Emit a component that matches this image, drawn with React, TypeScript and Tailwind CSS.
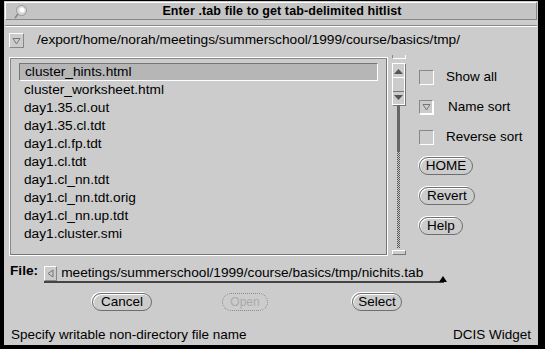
import React from 'react';

const files = [
  'cluster_hints.html',
  'cluster_worksheet.html',
  'day1.35.cl.out',
  'day1.35.cl.tdt',
  'day1.cl.fp.tdt',
  'day1.cl.tdt',
  'day1.cl_nn.tdt',
  'day1.cl_nn.tdt.orig',
  'day1.cl_nn.up.tdt',
  'day1.cluster.smi',
];

const font = { fontFamily: '"Liberation Sans", Arial, sans-serif' };

const DownTri = () => (
  <svg width="9" height="8" viewBox="0 0 9 8">
    <path d="M1 1.5 H8 L4.5 7 Z" fill="none" stroke="#777" strokeWidth="1" />
  </svg>
);

const PillButton: React.FC<{ label: string; w: string }> = ({ label, w }) => (
  <div
    className={`${w} h-[18px] rounded-full border border-[#6e6e6e] shadow-[inset_1px_1px_0_#ffffff,-1px_-1px_0_#ffffff] flex items-center justify-center text-[13.5px] text-black`}
  >
    {label}
  </div>
);

const Check: React.FC<{ label: string; on?: boolean }> = ({ label, on }) => (
  <div className="flex items-center h-[14px]">
    <div
      className={`w-[14px] h-[14px] border-t border-l border-[#888] shadow-[1px_1px_0_#ffffff] flex items-center justify-center ${
        on ? 'border-r border-b border-r-[#ffffff] border-b-[#ffffff]' : ''
      }`}
    >
      {on && <DownTri />}
    </div>
    <span className={`${on ? 'ml-[15px]' : 'ml-[13px]'} text-[13.5px]`}>{label}</span>
  </div>
);

export default function App() {
  return (
    <div className="w-[545px] h-[349px] bg-black pl-[4px] pr-[7px] pt-[1px] pb-[4px]" style={font}>
      <div className="bg-[#cccccc] h-full flex flex-col text-black">
        {/* title bar */}
        <div className="mx-[1px] mt-[1px] h-[18px] bg-[#c4c4c4] border-t border-l border-[#ffffff] border-b border-r border-b-[#888] border-r-[#888] relative flex items-center justify-center">
          <svg className="absolute left-[8px] top-[1px]" width="14" height="15" viewBox="0 0 14 15">
            <circle cx="7.5" cy="6.5" r="5" fill="#d8d8d8" stroke="#999" />
            <circle cx="8" cy="6" r="2.5" fill="#ffffff" />
            <path d="M4 10 L1 14" stroke="#888" strokeWidth="1.5" />
          </svg>
          <span className="text-[12.5px] font-bold ml-[22px] tracking-[0.1px]">Enter .tab file to get tab-delimited hitlist</span>
        </div>
        <div className="mt-[5px] mx-[1px] h-[2px] border-t border-[#888] border-b border-b-[#ffffff]" />

        {/* path row */}
        <div className="mt-[6px] flex items-center pl-[5px] h-[15px]">
          <div className="w-[15px] h-[15px] border-t border-l border-[#ffffff] border-b border-r border-b-[#888] border-r-[#888] flex items-center justify-center">
            <DownTri />
          </div>
          <span className="ml-[13px] text-[13.7px]">/export/home/norah/meetings/summerschool/1999/course/basics/tmp/</span>
        </div>

        {/* main area */}
        <div className="flex mt-[9px]">
          <div className="ml-[5px] w-[379px] h-[199px] border border-[#ffffff] shadow-[inset_1px_1px_0_#ffffff]">
            <div className="w-full h-full border-t border-l border-[#888] border-b border-r border-b-[#777] border-r-[#777] pt-[4px] pl-[8px] pr-[8px]">
              {files.map((f, i) => (
                <div
                  key={f}
                  className={`h-[18px] flex items-center pl-[5px] text-[13.7px] ${
                    i === 0 ? 'bg-[#b6b6b6] border-t border-l border-[#777] border-b border-r border-b-[#ffffff] border-r-[#ffffff]' : ''
                  }`}
                >
                  {f}
                </div>
              ))}
            </div>
          </div>

          {/* scrollbar */}
          <div className="ml-[3px] w-[15px] flex flex-col items-center -mt-[2px]">
            <div className="w-[14px] h-[4px] border-b border-r border-[#ffffff] border-l border-l-[#888]" />
            <div className="mt-[4px] w-[13px] h-[42px] border border-[#ffffff] shadow-[1px_1px_0_#777] flex flex-col">
              <div className="h-[14px] flex items-center justify-center border-b border-[#ffffff]">
                <svg width="9" height="6" viewBox="0 0 9 6"><path d="M0 6 L4.5 1 L9 6 Z" fill="#555" /></svg>
              </div>
              <div className="h-[14px] border-b border-[#777]" />
              <div className="h-[12px] flex items-center justify-center">
                <svg width="9" height="6" viewBox="0 0 9 6"><path d="M0 0 L9 0 L4.5 5 Z" fill="#555" /></svg>
              </div>
            </div>
            <div className="w-[3px] h-[47px] bg-[#666]" />
            <div className="w-[3px] h-[96px] bg-[repeating-conic-gradient(#555_0_25%,#cccccc_0_50%)] bg-[length:2px_2px]" />
            <div className="mt-[2px] w-[14px] h-[5px] border-t border-l border-[#ffffff] border-b border-r border-b-[#777] border-r-[#777]" />
          </div>

          {/* options */}
          <div className="ml-[13px] flex flex-col">
            <div className="mt-[13px]"><Check label="Show all" /></div>
            <div className="mt-[16px]"><Check label="Name sort" on /></div>
            <div className="mt-[16px]"><Check label="Reverse sort" /></div>
            <div className="mt-[13px]"><PillButton label="HOME" w="w-[54px]" /></div>
            <div className="mt-[12px]"><PillButton label="Revert" w="w-[56px]" /></div>
            <div className="mt-[12px]"><PillButton label="Help" w="w-[44px]" /></div>
          </div>
        </div>

        {/* file row */}
        <div className="mt-[9px] flex items-end pl-[6px] h-[18px]">
          <span className="text-[13.7px] font-bold mb-[1px]">File:</span>
          <div className="ml-[6px] w-[400px] h-[18px] border-b-2 border-[#444] flex items-center relative">
            <div className="w-[13px] h-[15px] border-t border-l border-[#ffffff] border-b border-r border-b-[#888] border-r-[#888] flex items-center justify-center">
              <svg width="7" height="9" viewBox="0 0 7 9"><path d="M6 1 L1 4.5 L6 8 Z" fill="none" stroke="#777" /></svg>
            </div>
            <span className="ml-[4px] text-[13.7px] whitespace-nowrap">meetings/summerschool/1999/course/basics/tmp/nichits.tab</span>
            <svg className="absolute right-[-3px] bottom-[-1px]" width="8" height="6" viewBox="0 0 8 6"><path d="M0 6 L4 0 L8 6 Z" fill="#000" /></svg>
          </div>
        </div>

        {/* buttons */}
        <div className="mt-[10px] flex items-center h-[18px]">
          <div className="ml-[88px]"><PillButton label="Cancel" w="w-[60px]" /></div>
          <div className="ml-[70px] w-[46px] h-[18px] rounded-full border border-dotted border-[#888] flex items-center justify-center text-[12px] text-[#aaa]">
            Open
          </div>
          <div className="ml-[84px]"><PillButton label="Select" w="w-[50px]" /></div>
        </div>

        {/* status */}
        <div className="mt-auto mb-[0px] flex justify-between px-[7px] text-[13.5px]">
          <span>Specify writable non-directory file name</span>
          <span>DCIS Widget</span>
        </div>
      </div>
    </div>
  );
}
